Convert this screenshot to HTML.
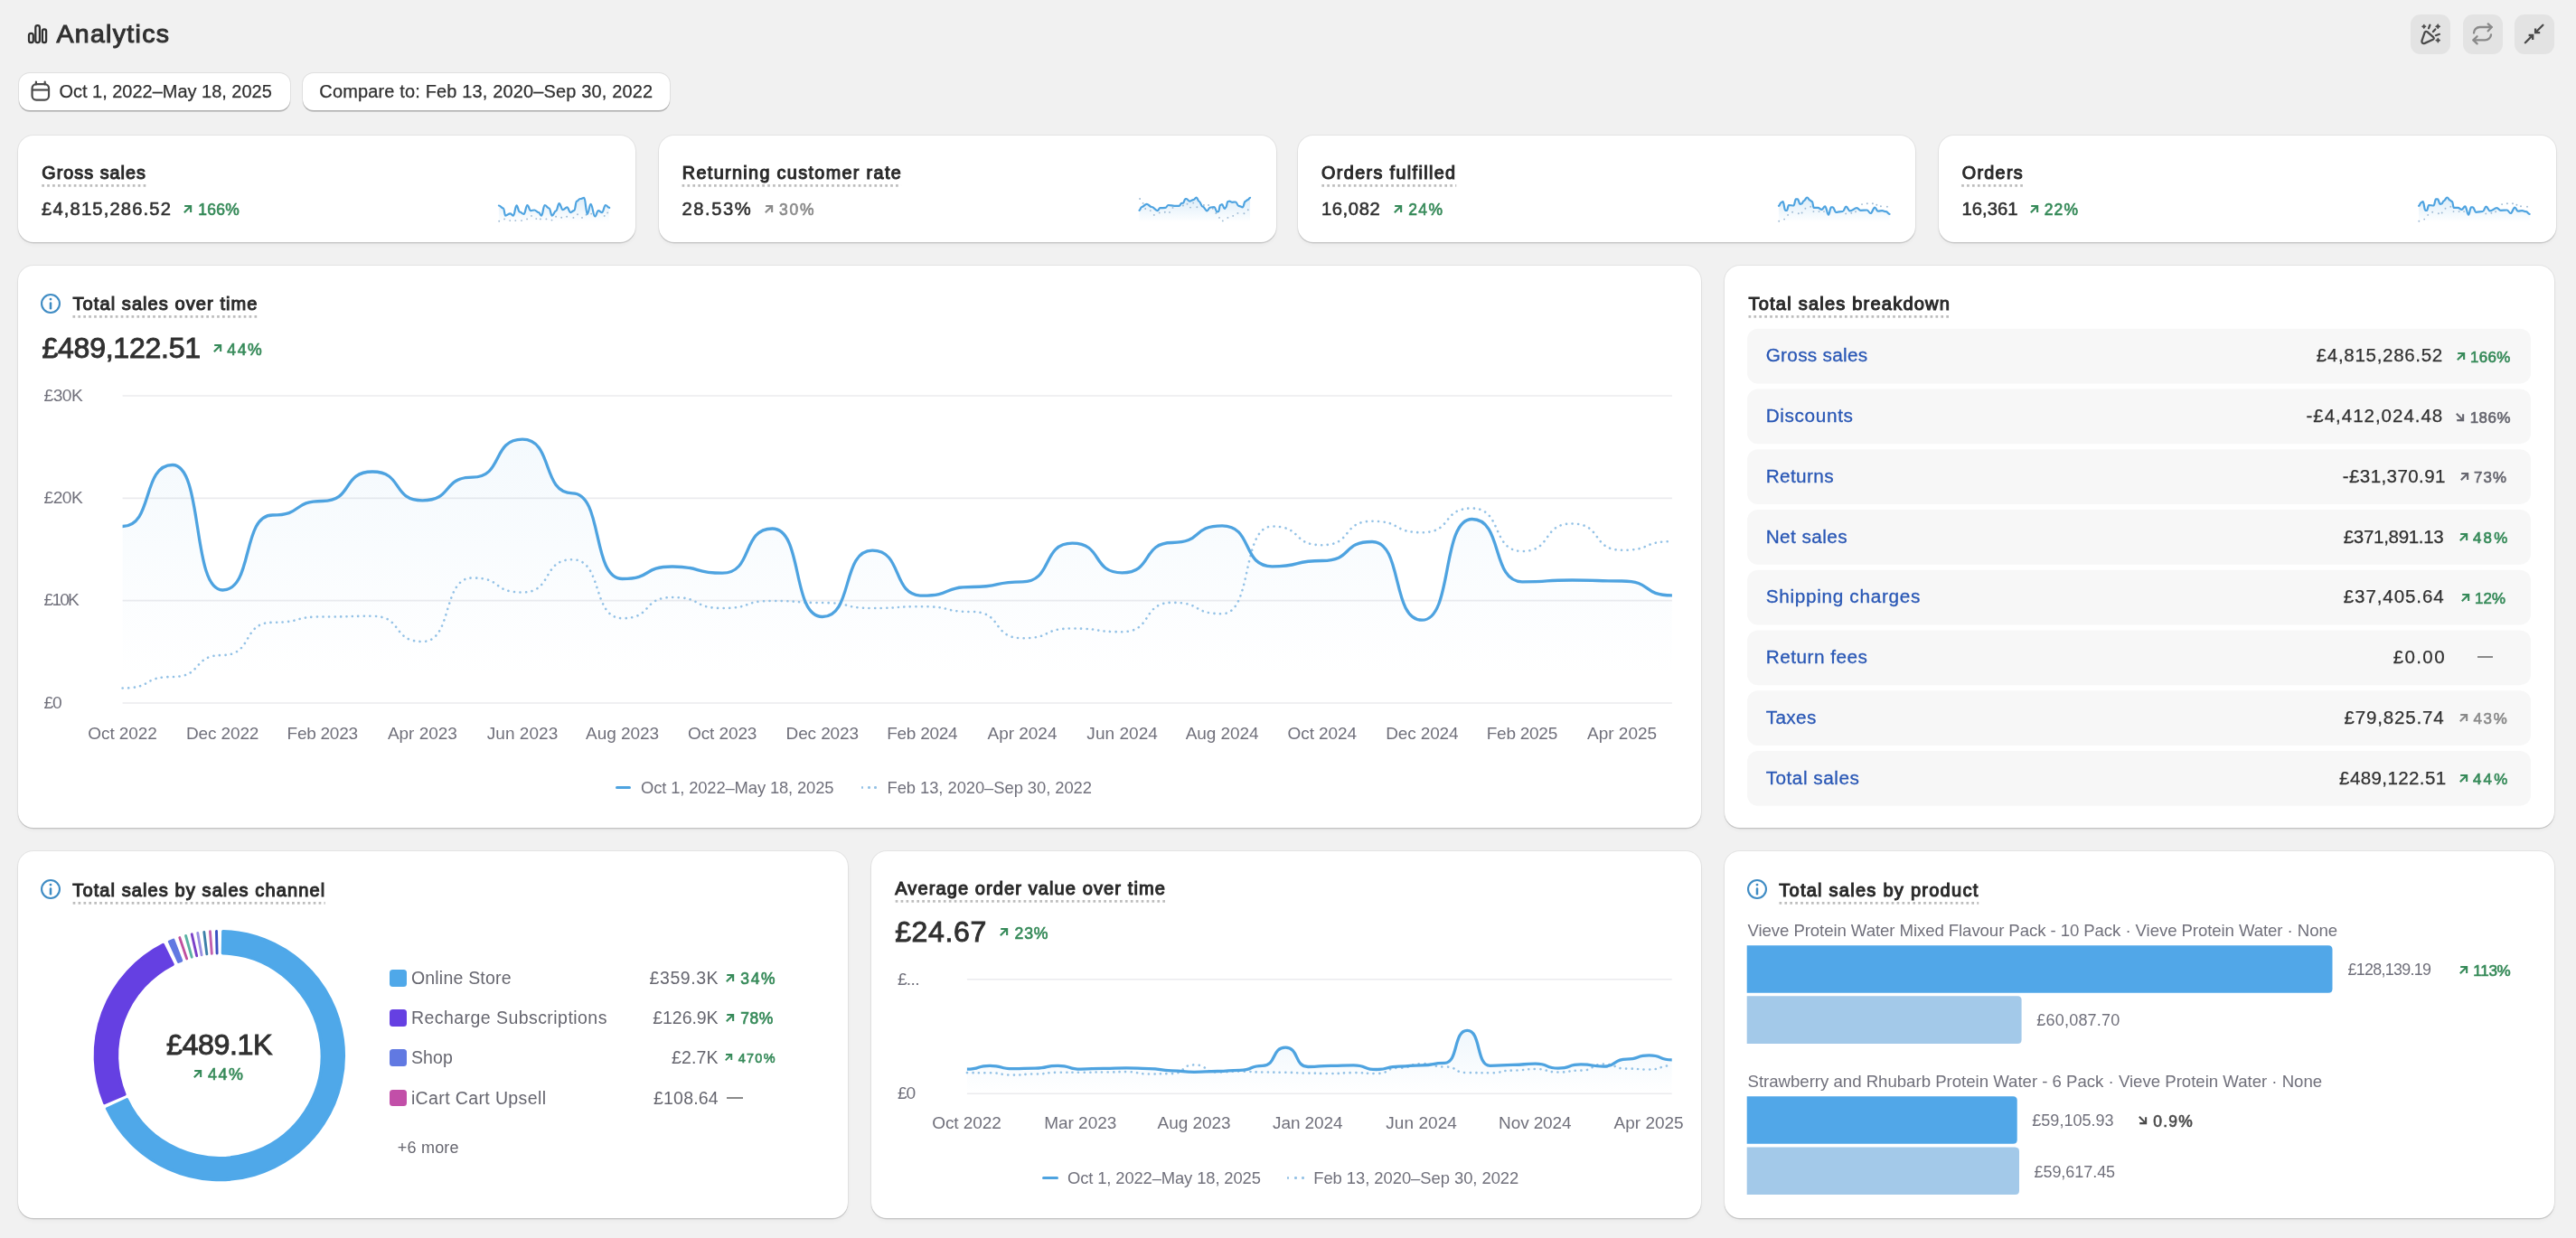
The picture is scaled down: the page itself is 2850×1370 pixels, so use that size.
<!DOCTYPE html>
<html lang="en">
<head>
<meta charset="utf-8">
<title>Analytics</title>
<style>
html,body{margin:0;padding:0;background:#f1f1f1;}
body{width:2850px;height:1370px;overflow:hidden;font-family:"Liberation Sans",sans-serif;}
#app{position:relative;width:2850px;height:1370px;background:#f1f1f1;overflow:hidden;will-change:transform;}
.t{position:absolute;white-space:pre;line-height:1;font-family:"Liberation Sans",sans-serif;}
.card{position:absolute;background:#fff;border-radius:17px;box-shadow:0 0 0 1px rgba(0,0,0,.055),0 1.4px 0 0 rgba(0,0,0,.115),0 3px 4px rgba(0,0,0,.035);}
.btn{position:absolute;background:#fff;border-radius:12px;box-shadow:0 0 0 1px rgba(0,0,0,.075),0 1.7px 0 0 rgba(0,0,0,.21);}
.ibtn{position:absolute;background:#e3e3e3;border-radius:11px;}
.row{position:absolute;background:#f7f7f7;border-radius:12px;}
.sq{position:absolute;width:18.5px;height:18.5px;border-radius:3.5px;}
.bar{position:absolute;border-radius:0 5px 5px 0;}
svg{position:absolute;overflow:visible;}
</style>
</head>
<body>
<div id="app">
<svg style="left:28px;top:24px" width="28" height="28" viewBox="28 24 28 28"><g fill="none" stroke="#303030" stroke-width="2.25"><rect x="32.0" y="36.75" width="4.8" height="10.35" rx="2.4"/><rect x="39.3" y="28.2" width="4.6" height="18.9" rx="2.3"/><rect x="46.9" y="32.45" width="4.2" height="14.65" rx="2.1"/></g></svg>
<div class="btn" style="left:20.6px;top:81.3px;width:300px;height:40.7px"></div>
<div class="btn" style="left:334.6px;top:81.3px;width:406.7px;height:40.7px"></div>
<svg style="left:32px;top:88px" width="26" height="26" viewBox="32 88 26 26"><g fill="none" stroke="#4a4a4a" stroke-width="2.2"><rect x="35.55" y="93.2" width="18.5" height="17.4" rx="4.6"/><path d="M35.6 99.5H54"/><path d="M39.9 93.4V90.6M49.7 93.4V90.6" stroke-linecap="round"/></g></svg>
<div class="ibtn" style="left:2666.6px;top:16px;width:44.1px;height:44px"></div>
<div class="ibtn" style="left:2724.6px;top:16px;width:44.1px;height:44px"></div>
<div class="ibtn" style="left:2782.2px;top:16px;width:44.1px;height:44px"></div>
<svg style="left:2674px;top:22px" width="30" height="30" viewBox="2674 22 30 30"><g fill="none" stroke="#4a4a4a" stroke-width="2.25" stroke-linecap="round" stroke-linejoin="round"><path d="M2682.6 35.9Q2683.9 33.9 2685.6 35.4L2692.2 41.2Q2693.6 42.8 2691.7 43.8L2682.6 47.9Q2679.3 48.7 2679.4 45.3Z"/><path d="M2688.4 27.7L2687.0 31.3M2694.3 32.4L2691.9 35.0M2694.9 39.2L2698.9 37.8"/></g><g fill="#4a4a4a"><path d="M2681.8 26.900000000000002L2682.664 28.436L2684.2000000000003 29.3L2682.664 30.164L2681.8 31.7L2680.936 30.164L2679.4 29.3L2680.936 28.436Z" stroke="#4a4a4a" stroke-width="0.7" stroke-linejoin="round"/><path d="M2697.2 26.6L2698.172 28.328L2699.8999999999996 29.3L2698.172 30.272000000000002L2697.2 32.0L2696.2279999999996 30.272000000000002L2694.5 29.3L2696.2279999999996 28.328Z" stroke="#4a4a4a" stroke-width="0.7" stroke-linejoin="round"/><path d="M2697.3 41.9L2698.2720000000004 43.628L2700.0 44.6L2698.2720000000004 45.572L2697.3 47.300000000000004L2696.328 45.572L2694.6000000000004 44.6L2696.328 43.628Z" stroke="#4a4a4a" stroke-width="0.7" stroke-linejoin="round"/></g></svg>
<svg style="left:2732px;top:22px" width="30" height="30" viewBox="2732 22 30 30"><g fill="none" stroke="#8a8a8a" stroke-width="2.3" stroke-linecap="round" stroke-linejoin="round"><path d="M2737.0 36.5A6.6 6.6 0 0 1 2743.6 30.0H2756.6"/><path d="M2752.7 26.4L2756.7 30.0L2752.7 34.3"/><path d="M2756.0 38.3A6.6 6.6 0 0 1 2749.4 44.4H2736.6"/><path d="M2740.6 40.3L2736.4 44.4L2740.6 48.4"/></g></svg>
<svg style="left:2790px;top:22px" width="30" height="30" viewBox="2790 22 30 30"><g fill="none" stroke="#4a4a4a" stroke-width="2.3" stroke-linecap="round" stroke-linejoin="miter"><path d="M2813.4 27.8L2805.4 35.8"/><path d="M2805.1 31.6V36.1H2810.2" stroke-linecap="butt"/><path d="M2793.9 47.3L2801.9 39.3"/><path d="M2797.6 39H2802.2V43.9" stroke-linecap="butt"/></g></svg>
<div class="card" style="left:20.0px;top:150px;width:683px;height:118px"></div>
<svg style="left:45.75px;top:204.15px" width="116.8" height="2.7" viewBox="0 0 116.8 2.7"><path d="M0 1.35H116.3" stroke="#bdbdbd" stroke-width="2.7" stroke-dasharray="2.7 3.24"/></svg>
<svg style="left:203.00px;top:227.10px" width="9.2" height="9.2" viewBox="0 0 10 10" stroke="#368a59"><path d="M1.3 1.15H8.85V8.7" fill="none" stroke-width="2.3" stroke-linejoin="miter"/><path d="M0.9 9.1L8.3 1.7" fill="none" stroke-width="2.3"/></svg>
<svg style="left:540px;top:206px" width="152" height="50" viewBox="540 206 152 50"><defs><linearGradient id="sg540" x1="0" y1="0" x2="0" y2="1"><stop offset="0" stop-color="#4ea3e0" stop-opacity="0.2"/><stop offset="1" stop-color="#4ea3e0" stop-opacity="0"/></linearGradient></defs><path d="M551.9 246.0L551.9 227.5C554.0 227.5 554.8 230.5 556.9 230.5C557.9 230.5 558.2 238.6 559.2 238.6C561.4 238.6 562.3 236.3 564.5 236.3C565.9 236.3 566.5 238.6 568.0 238.6C569.4 238.6 570.0 227.3 571.5 227.3C572.9 227.3 573.5 234.5 574.9 234.5C576.9 234.5 577.6 236.9 579.6 236.9C581.2 236.9 581.8 227.0 583.4 227.0C585.0 227.0 585.6 233.1 587.2 233.1C588.9 233.1 589.5 232.5 591.3 232.5C593.2 232.5 594.0 235.1 595.9 235.1C597.3 235.1 597.8 238.6 599.1 238.6C600.6 238.6 601.1 227.0 602.6 227.0C604.7 227.0 605.5 230.5 607.6 230.5C608.9 230.5 609.4 238.6 610.8 238.6C612.6 238.6 613.3 233.4 615.1 233.4C616.6 233.4 617.2 225.2 618.6 225.2C620.3 225.2 621.0 232.2 622.7 232.2C624.7 232.2 625.4 229.3 627.4 229.3C629.0 229.3 629.6 235.1 631.1 235.1C633.0 235.1 633.7 232.8 635.5 232.8C636.5 232.8 636.9 222.9 637.8 222.9C639.6 222.9 640.2 220.0 641.9 220.0C643.8 220.0 644.5 218.8 646.3 218.8C647.8 218.8 648.3 236.9 649.8 236.9C651.4 236.9 652.0 225.8 653.6 225.8C655.5 225.8 656.3 239.5 658.2 239.5C659.8 239.5 660.4 233.1 662.0 233.1C663.7 233.1 664.4 235.1 666.1 235.1C667.7 235.1 668.3 227.0 669.9 227.0C671.7 227.0 672.4 229.9 674.2 229.9L674.2 246.0Z" fill="url(#sg540)"/><g fill="#9db9d3"><circle cx="552.2" cy="244.7" r="0.95"/><circle cx="558.1" cy="242.4" r="0.95"/><circle cx="564.2" cy="244.1" r="0.95"/><circle cx="570.3" cy="244.1" r="0.95"/><circle cx="577.0" cy="244.1" r="0.95"/><circle cx="583.1" cy="242.4" r="0.95"/><circle cx="588.0" cy="238.9" r="0.95"/><circle cx="593.3" cy="242.1" r="0.95"/><circle cx="597.9" cy="242.4" r="0.95"/><circle cx="604.4" cy="242.4" r="0.95"/><circle cx="610.5" cy="243.6" r="0.95"/><circle cx="615.1" cy="239.8" r="0.95"/><circle cx="621.2" cy="240.7" r="0.95"/><circle cx="627.1" cy="239.8" r="0.95"/><circle cx="634.4" cy="240.9" r="0.95"/><circle cx="639.0" cy="237.2" r="0.95"/><circle cx="644.0" cy="240.9" r="0.95"/><circle cx="648.6" cy="237.7" r="0.95"/><circle cx="654.2" cy="236.6" r="0.95"/><circle cx="668.7" cy="238.9" r="0.95"/><circle cx="672.2" cy="235.4" r="0.95"/></g><path d="M551.9 227.5C554.0 227.5 554.8 230.5 556.9 230.5C557.9 230.5 558.2 238.6 559.2 238.6C561.4 238.6 562.3 236.3 564.5 236.3C565.9 236.3 566.5 238.6 568.0 238.6C569.4 238.6 570.0 227.3 571.5 227.3C572.9 227.3 573.5 234.5 574.9 234.5C576.9 234.5 577.6 236.9 579.6 236.9C581.2 236.9 581.8 227.0 583.4 227.0C585.0 227.0 585.6 233.1 587.2 233.1C588.9 233.1 589.5 232.5 591.3 232.5C593.2 232.5 594.0 235.1 595.9 235.1C597.3 235.1 597.8 238.6 599.1 238.6C600.6 238.6 601.1 227.0 602.6 227.0C604.7 227.0 605.5 230.5 607.6 230.5C608.9 230.5 609.4 238.6 610.8 238.6C612.6 238.6 613.3 233.4 615.1 233.4C616.6 233.4 617.2 225.2 618.6 225.2C620.3 225.2 621.0 232.2 622.7 232.2C624.7 232.2 625.4 229.3 627.4 229.3C629.0 229.3 629.6 235.1 631.1 235.1C633.0 235.1 633.7 232.8 635.5 232.8C636.5 232.8 636.9 222.9 637.8 222.9C639.6 222.9 640.2 220.0 641.9 220.0C643.8 220.0 644.5 218.8 646.3 218.8C647.8 218.8 648.3 236.9 649.8 236.9C651.4 236.9 652.0 225.8 653.6 225.8C655.5 225.8 656.3 239.5 658.2 239.5C659.8 239.5 660.4 233.1 662.0 233.1C663.7 233.1 664.4 235.1 666.1 235.1C667.7 235.1 668.3 227.0 669.9 227.0C671.7 227.0 672.4 229.9 674.2 229.9" fill="none" stroke="#4ea3e0" stroke-width="2.2" stroke-linejoin="round" stroke-linecap="round"/></svg>
<div class="card" style="left:729.0px;top:150px;width:683px;height:118px"></div>
<svg style="left:754.30px;top:204.15px" width="244.0" height="2.7" viewBox="0 0 244.0 2.7"><path d="M0 1.35H243.6" stroke="#bdbdbd" stroke-width="2.7" stroke-dasharray="2.7 3.24"/></svg>
<svg style="left:845.50px;top:227.10px" width="9.2" height="9.2" viewBox="0 0 10 10" stroke="#8a8a8a"><path d="M1.3 1.15H8.85V8.7" fill="none" stroke-width="2.3" stroke-linejoin="miter"/><path d="M0.9 9.1L8.3 1.7" fill="none" stroke-width="2.3"/></svg>
<svg style="left:1248px;top:206px" width="152" height="50" viewBox="1248 206 152 50"><defs><linearGradient id="sg1248" x1="0" y1="0" x2="0" y2="1"><stop offset="0" stop-color="#4ea3e0" stop-opacity="0.2"/><stop offset="1" stop-color="#4ea3e0" stop-opacity="0"/></linearGradient></defs><path d="M1260.5 246.0L1260.5 232.8C1261.6 232.8 1262.0 229.0 1263.1 229.0C1265.5 229.0 1266.4 225.8 1268.7 225.8C1271.0 225.8 1271.9 229.0 1274.2 229.0C1276.9 229.0 1277.9 233.1 1280.6 233.1C1281.8 233.1 1282.3 230.2 1283.5 230.2C1286.0 230.2 1286.9 229.9 1289.4 229.9C1290.7 229.9 1291.2 227.0 1292.6 227.0C1295.4 227.0 1296.4 227.8 1299.3 227.8C1301.5 227.8 1302.3 227.8 1304.5 227.8C1305.7 227.8 1306.2 224.9 1307.4 224.9C1308.1 224.9 1308.4 224.6 1309.2 224.6C1310.0 224.6 1310.3 220.3 1311.2 220.3C1311.8 220.3 1312.0 220.0 1312.6 220.0C1314.1 220.0 1314.7 222.6 1316.1 222.6C1317.9 222.6 1318.5 221.1 1320.2 221.1C1321.7 221.1 1322.2 218.5 1323.7 218.5C1324.9 218.5 1325.4 222.9 1326.6 222.9C1328.3 222.9 1329.0 228.7 1330.7 228.7C1332.7 228.7 1333.4 233.4 1335.4 233.4C1336.8 233.4 1337.4 229.6 1338.9 229.6C1340.8 229.6 1341.6 229.0 1343.5 229.0C1344.7 229.0 1345.2 234.5 1346.4 234.5C1347.2 234.5 1347.4 234.0 1348.2 234.0C1348.9 234.0 1349.2 227.0 1349.9 227.0C1350.8 227.0 1351.1 226.1 1352.0 226.1C1353.2 226.1 1353.6 231.0 1354.9 231.0C1355.5 231.0 1355.7 229.6 1356.3 229.6C1357.2 229.6 1357.5 223.2 1358.4 223.2C1359.1 223.2 1359.4 222.6 1360.1 222.6C1361.3 222.6 1361.8 223.8 1363.0 223.8C1364.7 223.8 1365.4 223.5 1367.1 223.5C1368.4 223.5 1369.0 227.8 1370.3 227.8C1372.3 227.8 1373.0 229.3 1375.0 229.3C1376.1 229.3 1376.5 222.9 1377.6 222.9C1378.8 222.9 1379.3 221.1 1380.5 221.1C1381.6 221.1 1382.0 218.8 1383.1 218.8L1383.1 246.0Z" fill="url(#sg1248)"/><g fill="#9db9d3"><circle cx="1261.1" cy="220.0" r="0.95"/><circle cx="1264.6" cy="224.9" r="0.95"/><circle cx="1267.2" cy="231.0" r="0.95"/><circle cx="1272.8" cy="233.1" r="0.95"/><circle cx="1276.8" cy="237.9" r="0.95"/><circle cx="1282.7" cy="235.4" r="0.95"/><circle cx="1288.8" cy="234.8" r="0.95"/><circle cx="1294.0" cy="234.9" r="0.95"/><circle cx="1297.5" cy="229.9" r="0.95"/><circle cx="1308.9" cy="227.5" r="0.95"/><circle cx="1313.5" cy="225.8" r="0.95"/><circle cx="1317.0" cy="229.6" r="0.95"/><circle cx="1320.2" cy="224.6" r="0.95"/><circle cx="1324.3" cy="229.2" r="0.95"/><circle cx="1331.9" cy="227.0" r="0.95"/><circle cx="1337.1" cy="227.0" r="0.95"/><circle cx="1341.8" cy="230.8" r="0.95"/><circle cx="1345.3" cy="236.0" r="0.95"/><circle cx="1349.0" cy="240.9" r="0.95"/><circle cx="1352.8" cy="244.4" r="0.95"/><circle cx="1358.4" cy="240.9" r="0.95"/><circle cx="1364.2" cy="238.9" r="0.95"/><circle cx="1369.4" cy="235.9" r="0.95"/><circle cx="1376.4" cy="236.3" r="0.95"/><circle cx="1380.8" cy="232.2" r="0.95"/></g><path d="M1260.5 232.8C1261.6 232.8 1262.0 229.0 1263.1 229.0C1265.5 229.0 1266.4 225.8 1268.7 225.8C1271.0 225.8 1271.9 229.0 1274.2 229.0C1276.9 229.0 1277.9 233.1 1280.6 233.1C1281.8 233.1 1282.3 230.2 1283.5 230.2C1286.0 230.2 1286.9 229.9 1289.4 229.9C1290.7 229.9 1291.2 227.0 1292.6 227.0C1295.4 227.0 1296.4 227.8 1299.3 227.8C1301.5 227.8 1302.3 227.8 1304.5 227.8C1305.7 227.8 1306.2 224.9 1307.4 224.9C1308.1 224.9 1308.4 224.6 1309.2 224.6C1310.0 224.6 1310.3 220.3 1311.2 220.3C1311.8 220.3 1312.0 220.0 1312.6 220.0C1314.1 220.0 1314.7 222.6 1316.1 222.6C1317.9 222.6 1318.5 221.1 1320.2 221.1C1321.7 221.1 1322.2 218.5 1323.7 218.5C1324.9 218.5 1325.4 222.9 1326.6 222.9C1328.3 222.9 1329.0 228.7 1330.7 228.7C1332.7 228.7 1333.4 233.4 1335.4 233.4C1336.8 233.4 1337.4 229.6 1338.9 229.6C1340.8 229.6 1341.6 229.0 1343.5 229.0C1344.7 229.0 1345.2 234.5 1346.4 234.5C1347.2 234.5 1347.4 234.0 1348.2 234.0C1348.9 234.0 1349.2 227.0 1349.9 227.0C1350.8 227.0 1351.1 226.1 1352.0 226.1C1353.2 226.1 1353.6 231.0 1354.9 231.0C1355.5 231.0 1355.7 229.6 1356.3 229.6C1357.2 229.6 1357.5 223.2 1358.4 223.2C1359.1 223.2 1359.4 222.6 1360.1 222.6C1361.3 222.6 1361.8 223.8 1363.0 223.8C1364.7 223.8 1365.4 223.5 1367.1 223.5C1368.4 223.5 1369.0 227.8 1370.3 227.8C1372.3 227.8 1373.0 229.3 1375.0 229.3C1376.1 229.3 1376.5 222.9 1377.6 222.9C1378.8 222.9 1379.3 221.1 1380.5 221.1C1381.6 221.1 1382.0 218.8 1383.1 218.8" fill="none" stroke="#4ea3e0" stroke-width="2.2" stroke-linejoin="round" stroke-linecap="round"/></svg>
<div class="card" style="left:1435.9px;top:150px;width:683px;height:118px"></div>
<svg style="left:1461.60px;top:204.15px" width="150.0" height="2.7" viewBox="0 0 150.0 2.7"><path d="M0 1.35H149.6" stroke="#bdbdbd" stroke-width="2.7" stroke-dasharray="2.7 3.24"/></svg>
<svg style="left:1541.70px;top:227.10px" width="9.2" height="9.2" viewBox="0 0 10 10" stroke="#368a59"><path d="M1.3 1.15H8.85V8.7" fill="none" stroke-width="2.3" stroke-linejoin="miter"/><path d="M0.9 9.1L8.3 1.7" fill="none" stroke-width="2.3"/></svg>
<svg style="left:1956px;top:206px" width="152" height="50" viewBox="1956 206 152 50"><defs><linearGradient id="sg1956" x1="0" y1="0" x2="0" y2="1"><stop offset="0" stop-color="#4ea3e0" stop-opacity="0.2"/><stop offset="1" stop-color="#4ea3e0" stop-opacity="0"/></linearGradient></defs><path d="M1967.9 246.0L1967.9 227.8C1969.0 227.8 1969.5 224.1 1970.6 224.1C1971.4 224.1 1971.7 223.2 1972.6 223.2C1973.7 223.2 1974.1 232.8 1975.2 232.8C1976.0 232.8 1976.2 232.8 1977.0 232.8C1977.8 232.8 1978.1 227.0 1979.0 227.0C1981.3 227.0 1982.2 227.5 1984.5 227.5C1985.5 227.5 1985.9 220.3 1986.9 220.3C1987.7 220.3 1988.1 220.3 1988.9 220.3C1990.0 220.3 1990.4 225.8 1991.5 225.8C1992.3 225.8 1992.5 225.5 1993.3 225.5C1994.3 225.5 1994.6 222.3 1995.6 222.3C1997.2 222.3 1997.8 218.5 1999.4 218.5C2000.7 218.5 2001.2 221.7 2002.6 221.7C2003.6 221.7 2003.9 223.2 2004.9 223.2C2005.7 223.2 2005.9 229.9 2006.7 229.9C2008.6 229.9 2009.4 229.9 2011.3 229.9C2013.0 229.9 2013.7 231.9 2015.4 231.9C2017.0 231.9 2017.6 228.4 2019.2 228.4C2020.8 228.4 2021.4 237.7 2023.0 237.7C2024.2 237.7 2024.7 229.3 2025.9 229.3C2026.7 229.3 2027.1 229.3 2027.9 229.3C2029.3 229.3 2029.8 234.8 2031.1 234.8C2034.3 234.8 2035.5 234.0 2038.7 234.0C2040.3 234.0 2040.9 228.7 2042.5 228.7C2044.2 228.7 2044.9 233.4 2046.6 233.4C2049.9 233.4 2051.1 230.2 2054.4 230.2C2056.1 230.2 2056.8 232.8 2058.5 232.8C2061.4 232.8 2062.6 232.5 2065.5 232.5C2067.2 232.5 2067.9 236.0 2069.6 236.0C2071.5 236.0 2072.3 229.6 2074.2 229.6C2075.7 229.6 2076.3 233.7 2077.7 233.7C2079.7 233.7 2080.4 233.1 2082.4 233.1C2084.2 233.1 2084.9 234.2 2086.8 234.2C2088.3 234.2 2088.9 236.9 2090.5 236.9L2090.5 246.0Z" fill="url(#sg1956)"/><g fill="#9db9d3"><circle cx="1968.2" cy="244.7" r="0.95"/><circle cx="1974.1" cy="242.6" r="0.95"/><circle cx="1978.1" cy="237.9" r="0.95"/><circle cx="1983.1" cy="234.8" r="0.95"/><circle cx="1989.8" cy="236.3" r="0.95"/><circle cx="1993.6" cy="235.5" r="0.95"/><circle cx="1997.4" cy="230.8" r="0.95"/><circle cx="2003.2" cy="228.7" r="0.95"/><circle cx="2006.4" cy="234.1" r="0.95"/><circle cx="2012.5" cy="234.1" r="0.95"/><circle cx="2018.0" cy="234.1" r="0.95"/><circle cx="2042.2" cy="236.4" r="0.95"/><circle cx="2048.3" cy="235.8" r="0.95"/><circle cx="2053.0" cy="234.2" r="0.95"/><circle cx="2060.0" cy="226.1" r="0.95"/><circle cx="2065.8" cy="225.2" r="0.95"/><circle cx="2071.9" cy="225.2" r="0.95"/><circle cx="2076.3" cy="226.8" r="0.95"/><circle cx="2080.9" cy="228.2" r="0.95"/><circle cx="2087.9" cy="228.7" r="0.95"/></g><path d="M1967.9 227.8C1969.0 227.8 1969.5 224.1 1970.6 224.1C1971.4 224.1 1971.7 223.2 1972.6 223.2C1973.7 223.2 1974.1 232.8 1975.2 232.8C1976.0 232.8 1976.2 232.8 1977.0 232.8C1977.8 232.8 1978.1 227.0 1979.0 227.0C1981.3 227.0 1982.2 227.5 1984.5 227.5C1985.5 227.5 1985.9 220.3 1986.9 220.3C1987.7 220.3 1988.1 220.3 1988.9 220.3C1990.0 220.3 1990.4 225.8 1991.5 225.8C1992.3 225.8 1992.5 225.5 1993.3 225.5C1994.3 225.5 1994.6 222.3 1995.6 222.3C1997.2 222.3 1997.8 218.5 1999.4 218.5C2000.7 218.5 2001.2 221.7 2002.6 221.7C2003.6 221.7 2003.9 223.2 2004.9 223.2C2005.7 223.2 2005.9 229.9 2006.7 229.9C2008.6 229.9 2009.4 229.9 2011.3 229.9C2013.0 229.9 2013.7 231.9 2015.4 231.9C2017.0 231.9 2017.6 228.4 2019.2 228.4C2020.8 228.4 2021.4 237.7 2023.0 237.7C2024.2 237.7 2024.7 229.3 2025.9 229.3C2026.7 229.3 2027.1 229.3 2027.9 229.3C2029.3 229.3 2029.8 234.8 2031.1 234.8C2034.3 234.8 2035.5 234.0 2038.7 234.0C2040.3 234.0 2040.9 228.7 2042.5 228.7C2044.2 228.7 2044.9 233.4 2046.6 233.4C2049.9 233.4 2051.1 230.2 2054.4 230.2C2056.1 230.2 2056.8 232.8 2058.5 232.8C2061.4 232.8 2062.6 232.5 2065.5 232.5C2067.2 232.5 2067.9 236.0 2069.6 236.0C2071.5 236.0 2072.3 229.6 2074.2 229.6C2075.7 229.6 2076.3 233.7 2077.7 233.7C2079.7 233.7 2080.4 233.1 2082.4 233.1C2084.2 233.1 2084.9 234.2 2086.8 234.2C2088.3 234.2 2088.9 236.9 2090.5 236.9" fill="none" stroke="#4ea3e0" stroke-width="2.2" stroke-linejoin="round" stroke-linecap="round"/></svg>
<div class="card" style="left:2144.8px;top:150px;width:683px;height:118px"></div>
<svg style="left:2170.20px;top:204.15px" width="69.0" height="2.7" viewBox="0 0 69.0 2.7"><path d="M0 1.35H68.6" stroke="#bdbdbd" stroke-width="2.7" stroke-dasharray="2.7 3.24"/></svg>
<svg style="left:2245.90px;top:227.10px" width="9.2" height="9.2" viewBox="0 0 10 10" stroke="#368a59"><path d="M1.3 1.15H8.85V8.7" fill="none" stroke-width="2.3" stroke-linejoin="miter"/><path d="M0.9 9.1L8.3 1.7" fill="none" stroke-width="2.3"/></svg>
<svg style="left:2664px;top:206px" width="152" height="50" viewBox="2664 206 152 50"><defs><linearGradient id="sg2664" x1="0" y1="0" x2="0" y2="1"><stop offset="0" stop-color="#4ea3e0" stop-opacity="0.2"/><stop offset="1" stop-color="#4ea3e0" stop-opacity="0"/></linearGradient></defs><path d="M2676.0 246.0L2676.0 227.8C2677.1 227.8 2677.6 224.1 2678.7 224.1C2679.5 224.1 2679.8 223.2 2680.7 223.2C2681.8 223.2 2682.2 232.8 2683.3 232.8C2684.1 232.8 2684.3 232.8 2685.1 232.8C2685.9 232.8 2686.2 227.0 2687.1 227.0C2689.4 227.0 2690.3 227.5 2692.6 227.5C2693.6 227.5 2694.0 220.3 2695.0 220.3C2695.8 220.3 2696.2 220.3 2697.0 220.3C2698.1 220.3 2698.5 225.8 2699.6 225.8C2700.4 225.8 2700.6 225.5 2701.4 225.5C2702.4 225.5 2702.7 222.3 2703.7 222.3C2705.3 222.3 2705.9 218.5 2707.5 218.5C2708.8 218.5 2709.3 221.7 2710.7 221.7C2711.7 221.7 2712.0 223.2 2713.0 223.2C2713.8 223.2 2714.0 229.9 2714.8 229.9C2716.7 229.9 2717.5 229.9 2719.4 229.9C2721.1 229.9 2721.8 231.9 2723.5 231.9C2725.1 231.9 2725.7 228.4 2727.3 228.4C2728.9 228.4 2729.5 237.7 2731.1 237.7C2732.3 237.7 2732.8 229.3 2734.0 229.3C2734.8 229.3 2735.2 229.3 2736.0 229.3C2737.4 229.3 2737.9 234.8 2739.2 234.8C2742.4 234.8 2743.6 234.0 2746.8 234.0C2748.4 234.0 2749.0 228.7 2750.6 228.7C2752.3 228.7 2753.0 233.4 2754.7 233.4C2758.0 233.4 2759.2 230.2 2762.5 230.2C2764.2 230.2 2764.9 232.8 2766.6 232.8C2769.5 232.8 2770.7 232.5 2773.6 232.5C2775.3 232.5 2776.0 236.0 2777.7 236.0C2779.6 236.0 2780.4 229.6 2782.3 229.6C2783.8 229.6 2784.4 233.7 2785.8 233.7C2787.8 233.7 2788.5 233.1 2790.5 233.1C2792.3 233.1 2793.0 234.2 2794.9 234.2C2796.4 234.2 2797.0 236.9 2798.6 236.9L2798.6 246.0Z" fill="url(#sg2664)"/><g fill="#9db9d3"><circle cx="2676.3" cy="244.7" r="0.95"/><circle cx="2682.2" cy="242.6" r="0.95"/><circle cx="2686.2" cy="237.9" r="0.95"/><circle cx="2691.2" cy="234.8" r="0.95"/><circle cx="2697.9" cy="236.3" r="0.95"/><circle cx="2701.7" cy="235.5" r="0.95"/><circle cx="2705.5" cy="230.8" r="0.95"/><circle cx="2711.3" cy="228.7" r="0.95"/><circle cx="2714.5" cy="234.1" r="0.95"/><circle cx="2720.6" cy="234.1" r="0.95"/><circle cx="2726.1" cy="234.1" r="0.95"/><circle cx="2750.3" cy="236.4" r="0.95"/><circle cx="2756.4" cy="235.8" r="0.95"/><circle cx="2761.1" cy="234.2" r="0.95"/><circle cx="2768.1" cy="226.1" r="0.95"/><circle cx="2773.9" cy="225.2" r="0.95"/><circle cx="2780.0" cy="225.2" r="0.95"/><circle cx="2784.4" cy="226.8" r="0.95"/><circle cx="2789.0" cy="228.2" r="0.95"/><circle cx="2796.0" cy="228.7" r="0.95"/></g><path d="M2676.0 227.8C2677.1 227.8 2677.6 224.1 2678.7 224.1C2679.5 224.1 2679.8 223.2 2680.7 223.2C2681.8 223.2 2682.2 232.8 2683.3 232.8C2684.1 232.8 2684.3 232.8 2685.1 232.8C2685.9 232.8 2686.2 227.0 2687.1 227.0C2689.4 227.0 2690.3 227.5 2692.6 227.5C2693.6 227.5 2694.0 220.3 2695.0 220.3C2695.8 220.3 2696.2 220.3 2697.0 220.3C2698.1 220.3 2698.5 225.8 2699.6 225.8C2700.4 225.8 2700.6 225.5 2701.4 225.5C2702.4 225.5 2702.7 222.3 2703.7 222.3C2705.3 222.3 2705.9 218.5 2707.5 218.5C2708.8 218.5 2709.3 221.7 2710.7 221.7C2711.7 221.7 2712.0 223.2 2713.0 223.2C2713.8 223.2 2714.0 229.9 2714.8 229.9C2716.7 229.9 2717.5 229.9 2719.4 229.9C2721.1 229.9 2721.8 231.9 2723.5 231.9C2725.1 231.9 2725.7 228.4 2727.3 228.4C2728.9 228.4 2729.5 237.7 2731.1 237.7C2732.3 237.7 2732.8 229.3 2734.0 229.3C2734.8 229.3 2735.2 229.3 2736.0 229.3C2737.4 229.3 2737.9 234.8 2739.2 234.8C2742.4 234.8 2743.6 234.0 2746.8 234.0C2748.4 234.0 2749.0 228.7 2750.6 228.7C2752.3 228.7 2753.0 233.4 2754.7 233.4C2758.0 233.4 2759.2 230.2 2762.5 230.2C2764.2 230.2 2764.9 232.8 2766.6 232.8C2769.5 232.8 2770.7 232.5 2773.6 232.5C2775.3 232.5 2776.0 236.0 2777.7 236.0C2779.6 236.0 2780.4 229.6 2782.3 229.6C2783.8 229.6 2784.4 233.7 2785.8 233.7C2787.8 233.7 2788.5 233.1 2790.5 233.1C2792.3 233.1 2793.0 234.2 2794.9 234.2C2796.4 234.2 2797.0 236.9 2798.6 236.9" fill="none" stroke="#4ea3e0" stroke-width="2.2" stroke-linejoin="round" stroke-linecap="round"/></svg>
<div class="card" style="left:20px;top:294px;width:1862px;height:622px"></div>
<svg style="left:43.80px;top:324.10px" width="24" height="24" viewBox="-12 -12 24 24"><circle r="9.95" fill="none" stroke="#3f8cc4" stroke-width="2.1"/><circle cy="-4.9" r="1.45" fill="#3f8cc4"/><path d="M0 -0.4V5.2" stroke="#3f8cc4" stroke-width="2.5" stroke-linecap="round"/></svg>
<svg style="left:80.00px;top:349.20px" width="206.0" height="2.7" viewBox="0 0 206.0 2.7"><path d="M0 1.35H205.6" stroke="#bdbdbd" stroke-width="2.7" stroke-dasharray="2.7 3.24"/></svg>
<svg style="left:235.50px;top:381.17px" width="9.2" height="9.2" viewBox="0 0 10 10" stroke="#368a59"><path d="M1.3 1.15H8.85V8.7" fill="none" stroke-width="2.3" stroke-linejoin="miter"/><path d="M0.9 9.1L8.3 1.7" fill="none" stroke-width="2.3"/></svg>
<svg style="left:120px;top:420px" width="1750" height="380" viewBox="120 420 1750 380"><defs><linearGradient id="mg" gradientUnits="userSpaceOnUse" x1="0" y1="470" x2="0" y2="750"><stop offset="0" stop-color="#4ea3e0" stop-opacity="0.065"/><stop offset="1" stop-color="#4ea3e0" stop-opacity="0"/></linearGradient></defs><path d="M135.6 438.0H1849.9" stroke="#ebebee" stroke-width="1.6"/><path d="M135.6 551.33H1849.9" stroke="#ebebee" stroke-width="1.6"/><path d="M135.6 664.67H1849.9" stroke="#ebebee" stroke-width="1.6"/><path d="M135.6 778.0H1849.9" stroke="#ebebee" stroke-width="1.6"/><path d="M135.6 582.5C169.9 582.5 156.6 514.5 190.9 514.5C225.2 514.5 211.9 653.0 246.2 653.0C280.5 653.0 267.2 570.0 301.5 570.0C335.8 570.0 322.5 554.5 356.8 554.5C391.1 554.5 377.8 522.0 412.1 522.0C446.4 522.0 433.1 553.8 467.4 553.8C501.7 553.8 488.4 528.2 522.7 528.2C557.0 528.2 543.7 486.2 578.0 486.2C612.3 486.2 599.0 545.8 633.3 545.8C667.6 545.8 654.3 640.5 688.6 640.5C722.9 640.5 709.6 627.0 743.9 627.0C778.2 627.0 764.9 634.2 799.2 634.2C833.5 634.2 820.2 585.0 854.5 585.0C888.8 585.0 875.5 682.5 909.8 682.5C944.1 682.5 930.8 609.2 965.1 609.2C999.4 609.2 986.1 659.2 1020.4 659.2C1054.7 659.2 1041.4 649.5 1075.7 649.5C1110.0 649.5 1096.7 643.8 1131.0 643.8C1165.3 643.8 1152.0 601.2 1186.3 601.2C1220.6 601.2 1207.3 633.8 1241.6 633.8C1275.9 633.8 1262.6 600.5 1296.9 600.5C1331.2 600.5 1317.9 581.8 1352.2 581.8C1386.5 581.8 1373.2 626.8 1407.5 626.8C1441.8 626.8 1428.5 620.5 1462.8 620.5C1497.1 620.5 1483.8 599.5 1518.1 599.5C1552.4 599.5 1539.1 686.2 1573.4 686.2C1607.7 686.2 1594.4 574.5 1628.7 574.5C1663.0 574.5 1649.7 643.8 1684.0 643.8C1718.3 643.8 1705.0 642.0 1739.3 642.0C1773.6 642.0 1760.3 643.0 1794.6 643.0C1828.9 643.0 1815.6 658.8 1849.9 658.8L1849.9 778L135.6 778Z" fill="url(#mg)"/><path d="M135.6 761.5C169.9 761.5 156.6 749.0 190.9 749.0C225.2 749.0 211.9 725.0 246.2 725.0C280.5 725.0 267.2 688.8 301.5 688.8C335.8 688.8 322.5 682.5 356.8 682.5C391.1 682.5 377.8 681.8 412.1 681.8C446.4 681.8 433.1 710.0 467.4 710.0C501.7 710.0 488.4 639.5 522.7 639.5C557.0 639.5 543.7 655.5 578.0 655.5C612.3 655.5 599.0 619.2 633.3 619.2C667.6 619.2 654.3 684.2 688.6 684.2C722.9 684.2 709.6 661.0 743.9 661.0C778.2 661.0 764.9 673.0 799.2 673.0C833.5 673.0 820.2 665.0 854.5 665.0C888.8 665.0 875.5 667.0 909.8 667.0C944.1 667.0 930.8 673.0 965.1 673.0C999.4 673.0 986.1 671.2 1020.4 671.2C1054.7 671.2 1041.4 677.0 1075.7 677.0C1110.0 677.0 1096.7 706.2 1131.0 706.2C1165.3 706.2 1152.0 695.5 1186.3 695.5C1220.6 695.5 1207.3 699.2 1241.6 699.2C1275.9 699.2 1262.6 666.8 1296.9 666.8C1331.2 666.8 1317.9 679.2 1352.2 679.2C1386.5 679.2 1373.2 582.5 1407.5 582.5C1441.8 582.5 1428.5 603.2 1462.8 603.2C1497.1 603.2 1483.8 576.8 1518.1 576.8C1552.4 576.8 1539.1 589.2 1573.4 589.2C1607.7 589.2 1594.4 562.5 1628.7 562.5C1663.0 562.5 1649.7 610.0 1684.0 610.0C1718.3 610.0 1705.0 579.5 1739.3 579.5C1773.6 579.5 1760.3 608.8 1794.6 608.8C1828.9 608.8 1815.6 599.2 1849.9 599.2" fill="none" stroke="#94c2e6" stroke-width="2.6" stroke-linecap="round" stroke-dasharray="0.1 6.4"/><path d="M135.6 582.5C169.9 582.5 156.6 514.5 190.9 514.5C225.2 514.5 211.9 653.0 246.2 653.0C280.5 653.0 267.2 570.0 301.5 570.0C335.8 570.0 322.5 554.5 356.8 554.5C391.1 554.5 377.8 522.0 412.1 522.0C446.4 522.0 433.1 553.8 467.4 553.8C501.7 553.8 488.4 528.2 522.7 528.2C557.0 528.2 543.7 486.2 578.0 486.2C612.3 486.2 599.0 545.8 633.3 545.8C667.6 545.8 654.3 640.5 688.6 640.5C722.9 640.5 709.6 627.0 743.9 627.0C778.2 627.0 764.9 634.2 799.2 634.2C833.5 634.2 820.2 585.0 854.5 585.0C888.8 585.0 875.5 682.5 909.8 682.5C944.1 682.5 930.8 609.2 965.1 609.2C999.4 609.2 986.1 659.2 1020.4 659.2C1054.7 659.2 1041.4 649.5 1075.7 649.5C1110.0 649.5 1096.7 643.8 1131.0 643.8C1165.3 643.8 1152.0 601.2 1186.3 601.2C1220.6 601.2 1207.3 633.8 1241.6 633.8C1275.9 633.8 1262.6 600.5 1296.9 600.5C1331.2 600.5 1317.9 581.8 1352.2 581.8C1386.5 581.8 1373.2 626.8 1407.5 626.8C1441.8 626.8 1428.5 620.5 1462.8 620.5C1497.1 620.5 1483.8 599.5 1518.1 599.5C1552.4 599.5 1539.1 686.2 1573.4 686.2C1607.7 686.2 1594.4 574.5 1628.7 574.5C1663.0 574.5 1649.7 643.8 1684.0 643.8C1718.3 643.8 1705.0 642.0 1739.3 642.0C1773.6 642.0 1760.3 643.0 1794.6 643.0C1828.9 643.0 1815.6 658.8 1849.9 658.8" fill="none" stroke="#4ea3e0" stroke-width="3.3" stroke-linecap="butt" stroke-linejoin="round"/></svg>
<div style="position:absolute;left:681px;top:870.10px;width:17.0px;height:3.2px;border-radius:1.6px;background:#4ea3e0"></div>
<div style="position:absolute;left:952.50px;top:870.40px;width:2.6px;height:2.6px;border-radius:50%;background:#94c2e6"></div>
<div style="position:absolute;left:959.95px;top:870.40px;width:2.6px;height:2.6px;border-radius:50%;background:#94c2e6"></div>
<div style="position:absolute;left:967.40px;top:870.40px;width:2.6px;height:2.6px;border-radius:50%;background:#94c2e6"></div>
<div class="card" style="left:1908px;top:294px;width:918.2px;height:622px"></div>
<svg style="left:1934.00px;top:349.40px" width="224.5" height="2.7" viewBox="0 0 224.5 2.7"><path d="M0 1.35H224.1" stroke="#bdbdbd" stroke-width="2.7" stroke-dasharray="2.7 3.24"/></svg>
<svg style="left:1930px;top:361px" width="875" height="66" viewBox="1930 361 875 66"><rect x="1933" y="363.80" width="867.1" height="60.7" rx="12" fill="#f7f7f7"/></svg>
<svg style="left:2717.50px;top:389.88px" width="9.2" height="9.2" viewBox="0 0 10 10" stroke="#368a59"><path d="M1.3 1.15H8.85V8.7" fill="none" stroke-width="2.3" stroke-linejoin="miter"/><path d="M0.9 9.1L8.3 1.7" fill="none" stroke-width="2.3"/></svg>
<svg style="left:1930px;top:428px" width="875" height="66" viewBox="1930 428 875 66"><rect x="1933" y="430.54" width="867.1" height="60.7" rx="12" fill="#f7f7f7"/></svg>
<svg style="left:2717.25px;top:456.62px" width="9.2" height="9.2" viewBox="0 0 10 10" stroke="#66666f"><path d="M1.3 8.85H8.85V1.3" fill="none" stroke-width="2.3" stroke-linejoin="miter"/><path d="M0.9 0.9L8.3 8.3" fill="none" stroke-width="2.3"/></svg>
<svg style="left:1930px;top:495px" width="875" height="66" viewBox="1930 495 875 66"><rect x="1933" y="497.28" width="867.1" height="60.7" rx="12" fill="#f7f7f7"/></svg>
<svg style="left:2721.70px;top:523.36px" width="9.2" height="9.2" viewBox="0 0 10 10" stroke="#66666f"><path d="M1.3 1.15H8.85V8.7" fill="none" stroke-width="2.3" stroke-linejoin="miter"/><path d="M0.9 9.1L8.3 1.7" fill="none" stroke-width="2.3"/></svg>
<svg style="left:1930px;top:562px" width="875" height="66" viewBox="1930 562 875 66"><rect x="1933" y="564.02" width="867.1" height="60.7" rx="12" fill="#f7f7f7"/></svg>
<svg style="left:2720.60px;top:590.10px" width="9.2" height="9.2" viewBox="0 0 10 10" stroke="#368a59"><path d="M1.3 1.15H8.85V8.7" fill="none" stroke-width="2.3" stroke-linejoin="miter"/><path d="M0.9 9.1L8.3 1.7" fill="none" stroke-width="2.3"/></svg>
<svg style="left:1930px;top:628px" width="875" height="66" viewBox="1930 628 875 66"><rect x="1933" y="630.76" width="867.1" height="60.7" rx="12" fill="#f7f7f7"/></svg>
<svg style="left:2722.65px;top:656.84px" width="9.2" height="9.2" viewBox="0 0 10 10" stroke="#368a59"><path d="M1.3 1.15H8.85V8.7" fill="none" stroke-width="2.3" stroke-linejoin="miter"/><path d="M0.9 9.1L8.3 1.7" fill="none" stroke-width="2.3"/></svg>
<svg style="left:1930px;top:695px" width="875" height="66" viewBox="1930 695 875 66"><rect x="1933" y="697.50" width="867.1" height="60.7" rx="12" fill="#f7f7f7"/></svg>
<div style="position:absolute;left:2741.2px;top:726.05px;width:17.0px;height:2.1px;background:#8a8a8a"></div>
<svg style="left:1930px;top:762px" width="875" height="66" viewBox="1930 762 875 66"><rect x="1933" y="764.24" width="867.1" height="60.7" rx="12" fill="#f7f7f7"/></svg>
<svg style="left:2721.00px;top:790.32px" width="9.2" height="9.2" viewBox="0 0 10 10" stroke="#8a8a8a"><path d="M1.3 1.15H8.85V8.7" fill="none" stroke-width="2.3" stroke-linejoin="miter"/><path d="M0.9 9.1L8.3 1.7" fill="none" stroke-width="2.3"/></svg>
<svg style="left:1930px;top:828px" width="875" height="66" viewBox="1930 828 875 66"><rect x="1933" y="830.98" width="867.1" height="60.7" rx="12" fill="#f7f7f7"/></svg>
<svg style="left:2720.50px;top:857.06px" width="9.2" height="9.2" viewBox="0 0 10 10" stroke="#368a59"><path d="M1.3 1.15H8.85V8.7" fill="none" stroke-width="2.3" stroke-linejoin="miter"/><path d="M0.9 9.1L8.3 1.7" fill="none" stroke-width="2.3"/></svg>
<div class="card" style="left:20px;top:942px;width:918px;height:406px"></div>
<svg style="left:43.80px;top:972.30px" width="24" height="24" viewBox="-12 -12 24 24"><circle r="9.95" fill="none" stroke="#3f8cc4" stroke-width="2.1"/><circle cy="-4.9" r="1.45" fill="#3f8cc4"/><path d="M0 -0.4V5.2" stroke="#3f8cc4" stroke-width="2.5" stroke-linecap="round"/></svg>
<svg style="left:79.80px;top:997.70px" width="280.8" height="2.7" viewBox="0 0 280.8 2.7"><path d="M0 1.35H280.4" stroke="#bdbdbd" stroke-width="2.7" stroke-dasharray="2.7 3.24"/></svg>
<svg style="left:100px;top:1025px" width="290" height="290" viewBox="100 1025 290 290"><path d="M246.73 1030.55A137.60 137.60 0 1 1 118.41 1226.83L140.51 1216.71A113.30 113.30 0 1 0 246.33 1054.85Z" fill="#4fa8e9" stroke="#4fa8e9" stroke-width="3.2" stroke-linejoin="round"/><path d="M115.66 1220.61A137.60 137.60 0 0 1 180.45 1045.46L191.22 1067.25A113.30 113.30 0 0 0 138.02 1211.08Z" fill="#6540e2" stroke="#6540e2" stroke-width="3.2" stroke-linejoin="round"/><path d="M187.20 1042.04A137.80 137.80 0 0 1 191.94 1040.05L200.83 1063.10A113.10 113.10 0 0 0 197.41 1064.53Z" fill="#6179e2" stroke="#6179e2" stroke-width="2.8" stroke-linejoin="round"/><path d="M198.78 1037.59L206.65 1060.90" stroke="#c0509f" stroke-width="2.9" stroke-linecap="round"/><path d="M205.53 1035.50L212.19 1059.18" stroke="#5bb2a4" stroke-width="2.9" stroke-linecap="round"/><path d="M212.21 1033.80L217.69 1057.78" stroke="#7a40c8" stroke-width="2.9" stroke-linecap="round"/><path d="M218.74 1032.48L223.05 1056.70" stroke="#9a8fe2" stroke-width="2.9" stroke-linecap="round"/><path d="M225.80 1031.41L228.84 1055.82" stroke="#3d7fa9" stroke-width="2.9" stroke-linecap="round"/><path d="M232.45 1030.74L234.31 1055.27" stroke="#c260ae" stroke-width="2.9" stroke-linecap="round"/><path d="M239.48 1030.39L240.09 1054.98" stroke="#3b4fc1" stroke-width="2.9" stroke-linecap="round"/></svg>
<svg style="left:214.30px;top:1183.65px" width="9.2" height="9.2" viewBox="0 0 10 10" stroke="#368a59"><path d="M1.3 1.15H8.85V8.7" fill="none" stroke-width="2.3" stroke-linejoin="miter"/><path d="M0.9 9.1L8.3 1.7" fill="none" stroke-width="2.3"/></svg>
<div class="sq" style="left:431.1px;top:1073.35px;background:#4fa8e9"></div>
<svg style="left:802.50px;top:1077.90px" width="9.2" height="9.2" viewBox="0 0 10 10" stroke="#368a59"><path d="M1.3 1.15H8.85V8.7" fill="none" stroke-width="2.3" stroke-linejoin="miter"/><path d="M0.9 9.1L8.3 1.7" fill="none" stroke-width="2.3"/></svg>
<div class="sq" style="left:431.1px;top:1117.42px;background:#6540e2"></div>
<svg style="left:802.50px;top:1121.97px" width="9.2" height="9.2" viewBox="0 0 10 10" stroke="#368a59"><path d="M1.3 1.15H8.85V8.7" fill="none" stroke-width="2.3" stroke-linejoin="miter"/><path d="M0.9 9.1L8.3 1.7" fill="none" stroke-width="2.3"/></svg>
<div class="sq" style="left:431.1px;top:1161.49px;background:#6179e2"></div>
<svg style="left:802.30px;top:1166.14px" width="8.2" height="8.2" viewBox="0 0 10 10" stroke="#368a59"><path d="M1.3 1.15H8.85V8.7" fill="none" stroke-width="2.3" stroke-linejoin="miter"/><path d="M0.9 9.1L8.3 1.7" fill="none" stroke-width="2.3"/></svg>
<div class="sq" style="left:431.1px;top:1205.56px;background:#c24fa8"></div>
<div style="position:absolute;left:804px;top:1213.96px;width:18px;height:2.1px;background:#8a8a8a"></div>
<div class="card" style="left:964px;top:942px;width:918px;height:406px"></div>
<svg style="left:989.70px;top:996.10px" width="300.7" height="2.7" viewBox="0 0 300.7 2.7"><path d="M0 1.35H300.3" stroke="#bdbdbd" stroke-width="2.7" stroke-dasharray="2.7 3.24"/></svg>
<svg style="left:1106.10px;top:1027.47px" width="9.2" height="9.2" viewBox="0 0 10 10" stroke="#368a59"><path d="M1.3 1.15H8.85V8.7" fill="none" stroke-width="2.3" stroke-linejoin="miter"/><path d="M0.9 9.1L8.3 1.7" fill="none" stroke-width="2.3"/></svg>
<svg style="left:1060px;top:1070px" width="800" height="150" viewBox="1060 1070 800 150"><defs><linearGradient id="ag" gradientUnits="userSpaceOnUse" x1="0" y1="1140" x2="0" y2="1210"><stop offset="0" stop-color="#4ea3e0" stop-opacity="0.09"/><stop offset="1" stop-color="#4ea3e0" stop-opacity="0"/></linearGradient></defs><path d="M1069.9 1083.8H1849.7M1069.9 1210.3H1849.7" stroke="#ebebee" stroke-width="1.6"/><path d="M1069.9 1183.1C1085.5 1183.1 1079.5 1179.3 1095.1 1179.3C1110.7 1179.3 1104.6 1182.6 1120.2 1182.6C1135.8 1182.6 1129.8 1182.1 1145.4 1182.1C1161.0 1182.1 1154.9 1179.3 1170.5 1179.3C1186.1 1179.3 1180.1 1183.1 1195.7 1183.1C1211.3 1183.1 1205.2 1182.3 1220.8 1182.3C1236.4 1182.3 1230.4 1181.8 1246.0 1181.8C1261.6 1181.8 1255.5 1182.6 1271.1 1182.6C1286.7 1182.6 1280.7 1184.8 1296.3 1184.8C1311.9 1184.8 1305.9 1186.3 1321.4 1186.3C1337.0 1186.3 1331.0 1185.5 1346.6 1185.5C1362.2 1185.5 1356.2 1184.3 1371.8 1184.3C1387.4 1184.3 1381.3 1179.3 1396.9 1179.3C1412.5 1179.3 1406.5 1159.2 1422.1 1159.2C1437.7 1159.2 1431.6 1180.5 1447.2 1180.5C1462.8 1180.5 1456.8 1179.3 1472.4 1179.3C1488.0 1179.3 1481.9 1178.8 1497.5 1178.8C1513.1 1178.8 1507.1 1183.5 1522.7 1183.5C1538.3 1183.5 1532.2 1180.1 1547.8 1180.1C1563.4 1180.1 1557.4 1178.8 1573.0 1178.8C1588.6 1178.8 1582.6 1176.4 1598.2 1176.4C1613.7 1176.4 1607.7 1140.4 1623.3 1140.4C1638.9 1140.4 1632.9 1179.3 1648.5 1179.3C1664.1 1179.3 1658.0 1178.4 1673.6 1178.4C1689.2 1178.4 1683.2 1177.1 1698.8 1177.1C1714.4 1177.1 1708.3 1182.1 1723.9 1182.1C1739.5 1182.1 1733.5 1177.9 1749.1 1177.9C1764.7 1177.9 1758.6 1180.1 1774.2 1180.1C1789.8 1180.1 1783.8 1172.1 1799.4 1172.1C1815.0 1172.1 1808.9 1167.9 1824.5 1167.9C1840.1 1167.9 1834.1 1172.9 1849.7 1172.9L1849.7 1210.3L1069.9 1210.3Z" fill="url(#ag)"/><path d="M1069.9 1187.1C1085.5 1187.1 1079.5 1187.3 1095.1 1187.3C1110.7 1187.3 1104.6 1189.6 1120.2 1189.6C1135.8 1189.6 1129.8 1188.5 1145.4 1188.5C1161.0 1188.5 1154.9 1186.8 1170.5 1186.8C1186.1 1186.8 1180.1 1186.8 1195.7 1186.8C1211.3 1186.8 1205.2 1186.5 1220.8 1186.5C1236.4 1186.5 1230.4 1186.1 1246.0 1186.1C1261.6 1186.1 1255.5 1188.5 1271.1 1188.5C1286.7 1188.5 1280.7 1188.1 1296.3 1188.1C1311.9 1188.1 1305.9 1178.4 1321.4 1178.4C1337.0 1178.4 1331.0 1186.5 1346.6 1186.5C1362.2 1186.5 1356.2 1185.6 1371.8 1185.6C1387.4 1185.6 1381.3 1186.5 1396.9 1186.5C1412.5 1186.5 1406.5 1186.8 1422.1 1186.8C1437.7 1186.8 1431.6 1187.6 1447.2 1187.6C1462.8 1187.6 1456.8 1188.0 1472.4 1188.0C1488.0 1188.0 1481.9 1187.1 1497.5 1187.1C1513.1 1187.1 1507.1 1188.0 1522.7 1188.0C1538.3 1188.0 1532.2 1181.8 1547.8 1181.8C1563.4 1181.8 1557.4 1177.1 1573.0 1177.1C1588.6 1177.1 1582.6 1180.5 1598.2 1180.5C1613.7 1180.5 1607.7 1187.1 1623.3 1187.1C1638.9 1187.1 1632.9 1187.3 1648.5 1187.3C1664.1 1187.3 1658.0 1184.6 1673.6 1184.6C1689.2 1184.6 1683.2 1183.0 1698.8 1183.0C1714.4 1183.0 1708.3 1186.5 1723.9 1186.5C1739.5 1186.5 1733.5 1184.6 1749.1 1184.6C1764.7 1184.6 1758.6 1177.6 1774.2 1177.6C1789.8 1177.6 1783.8 1182.6 1799.4 1182.6C1815.0 1182.6 1808.9 1183.5 1824.5 1183.5C1840.1 1183.5 1834.1 1179.3 1849.7 1179.3" fill="none" stroke="#94c2e6" stroke-width="2.6" stroke-linecap="round" stroke-dasharray="0.1 6.4"/><path d="M1069.9 1183.1C1085.5 1183.1 1079.5 1179.3 1095.1 1179.3C1110.7 1179.3 1104.6 1182.6 1120.2 1182.6C1135.8 1182.6 1129.8 1182.1 1145.4 1182.1C1161.0 1182.1 1154.9 1179.3 1170.5 1179.3C1186.1 1179.3 1180.1 1183.1 1195.7 1183.1C1211.3 1183.1 1205.2 1182.3 1220.8 1182.3C1236.4 1182.3 1230.4 1181.8 1246.0 1181.8C1261.6 1181.8 1255.5 1182.6 1271.1 1182.6C1286.7 1182.6 1280.7 1184.8 1296.3 1184.8C1311.9 1184.8 1305.9 1186.3 1321.4 1186.3C1337.0 1186.3 1331.0 1185.5 1346.6 1185.5C1362.2 1185.5 1356.2 1184.3 1371.8 1184.3C1387.4 1184.3 1381.3 1179.3 1396.9 1179.3C1412.5 1179.3 1406.5 1159.2 1422.1 1159.2C1437.7 1159.2 1431.6 1180.5 1447.2 1180.5C1462.8 1180.5 1456.8 1179.3 1472.4 1179.3C1488.0 1179.3 1481.9 1178.8 1497.5 1178.8C1513.1 1178.8 1507.1 1183.5 1522.7 1183.5C1538.3 1183.5 1532.2 1180.1 1547.8 1180.1C1563.4 1180.1 1557.4 1178.8 1573.0 1178.8C1588.6 1178.8 1582.6 1176.4 1598.2 1176.4C1613.7 1176.4 1607.7 1140.4 1623.3 1140.4C1638.9 1140.4 1632.9 1179.3 1648.5 1179.3C1664.1 1179.3 1658.0 1178.4 1673.6 1178.4C1689.2 1178.4 1683.2 1177.1 1698.8 1177.1C1714.4 1177.1 1708.3 1182.1 1723.9 1182.1C1739.5 1182.1 1733.5 1177.9 1749.1 1177.9C1764.7 1177.9 1758.6 1180.1 1774.2 1180.1C1789.8 1180.1 1783.8 1172.1 1799.4 1172.1C1815.0 1172.1 1808.9 1167.9 1824.5 1167.9C1840.1 1167.9 1834.1 1172.9 1849.7 1172.9" fill="none" stroke="#4ea3e0" stroke-width="3.3" stroke-linecap="butt" stroke-linejoin="round"/></svg>
<div style="position:absolute;left:1152.8px;top:1302.00px;width:18.0px;height:3.2px;border-radius:1.6px;background:#4ea3e0"></div>
<div style="position:absolute;left:1423.90px;top:1302.30px;width:2.6px;height:2.6px;border-radius:50%;background:#94c2e6"></div>
<div style="position:absolute;left:1432.00px;top:1302.30px;width:2.6px;height:2.6px;border-radius:50%;background:#94c2e6"></div>
<div style="position:absolute;left:1440.10px;top:1302.30px;width:2.6px;height:2.6px;border-radius:50%;background:#94c2e6"></div>
<div class="card" style="left:1908px;top:942px;width:918.2px;height:406px"></div>
<svg style="left:1931.70px;top:972.30px" width="24" height="24" viewBox="-12 -12 24 24"><circle r="9.95" fill="none" stroke="#3f8cc4" stroke-width="2.1"/><circle cy="-4.9" r="1.45" fill="#3f8cc4"/><path d="M0 -0.4V5.2" stroke="#3f8cc4" stroke-width="2.5" stroke-linecap="round"/></svg>
<svg style="left:1967.70px;top:997.70px" width="222.1" height="2.7" viewBox="0 0 222.1 2.7"><path d="M0 1.35H221.7" stroke="#bdbdbd" stroke-width="2.7" stroke-dasharray="2.7 3.24"/></svg>
<svg style="left:1930px;top:1040px" width="660" height="290" viewBox="1930 1040 660 290"><path d="M1932.7 1046.2H2576.0Q2580.5 1046.2 2580.5 1050.7V1094.3Q2580.5 1098.8 2576.0 1098.8H1932.7Z" fill="#51a7e8"/><path d="M1932.7 1102.3H2232.1Q2236.6 1102.3 2236.6 1106.8V1150.4Q2236.6 1154.9 2232.1 1154.9H1932.7Z" fill="#a3c9e9"/><path d="M1932.7 1213.2H2227.2Q2231.7 1213.2 2231.7 1217.7V1261.3Q2231.7 1265.8 2227.2 1265.8H1932.7Z" fill="#51a7e8"/><path d="M1932.7 1269.5H2229.5Q2234.0 1269.5 2234.0 1274.0V1317.6Q2234.0 1322.1 2229.5 1322.1H1932.7Z" fill="#a3c9e9"/></svg>
<svg style="left:2720.70px;top:1068.55px" width="9.2" height="9.2" viewBox="0 0 10 10" stroke="#368a59"><path d="M1.3 1.15H8.85V8.7" fill="none" stroke-width="2.3" stroke-linejoin="miter"/><path d="M0.9 9.1L8.3 1.7" fill="none" stroke-width="2.3"/></svg>
<svg style="left:2366.10px;top:1235.40px" width="9.2" height="9.2" viewBox="0 0 10 10" stroke="#4a4a4a"><path d="M1.3 8.85H8.85V1.3" fill="none" stroke-width="2.3" stroke-linejoin="miter"/><path d="M0.9 0.9L8.3 8.3" fill="none" stroke-width="2.3"/></svg>
<span class="t" style="left:62.52px;top:23.48px;font-size:28.47px;color:#303030;letter-spacing:1.316px;-webkit-text-stroke:1.05px #303030;">Analytics</span>
<span class="t" style="left:65.42px;top:91.88px;font-size:19.94px;color:#303030;letter-spacing:0.016px;-webkit-text-stroke:0.25px #303030;">Oct 1, 2022–May 18, 2025</span>
<span class="t" style="left:353.32px;top:91.88px;font-size:19.94px;color:#303030;letter-spacing:0.174px;-webkit-text-stroke:0.25px #303030;">Compare to: Feb 13, 2020–Sep 30, 2022</span>
<span class="t" style="left:46.27px;top:182.22px;font-size:19.77px;color:#2a2a2a;letter-spacing:1.034px;-webkit-text-stroke:1.05px #2a2a2a;">Gross sales</span>
<span class="t" style="left:46.02px;top:221.47px;font-size:20.2px;color:#303030;letter-spacing:1.153px;-webkit-text-stroke:0.55px #303030;">£4,815,286.52</span>
<span class="t" style="left:219.32px;top:224.48px;font-size:17.46px;color:#368a59;letter-spacing:0.247px;-webkit-text-stroke:0.65px #368a59;">166%</span>
<span class="t" style="left:754.82px;top:182.22px;font-size:19.77px;color:#2a2a2a;letter-spacing:1.360px;-webkit-text-stroke:1.05px #2a2a2a;">Returning customer rate</span>
<span class="t" style="left:754.57px;top:221.47px;font-size:20.2px;color:#303030;letter-spacing:1.546px;-webkit-text-stroke:0.55px #303030;">28.53%</span>
<span class="t" style="left:862.08px;top:224.48px;font-size:17.46px;color:#8a8a8a;letter-spacing:1.722px;-webkit-text-stroke:0.65px #8a8a8a;">30%</span>
<span class="t" style="left:1462.12px;top:182.22px;font-size:19.77px;color:#2a2a2a;letter-spacing:1.367px;-webkit-text-stroke:1.05px #2a2a2a;">Orders fulfilled</span>
<span class="t" style="left:1461.88px;top:221.47px;font-size:20.2px;color:#303030;letter-spacing:0.640px;-webkit-text-stroke:0.55px #303030;">16,082</span>
<span class="t" style="left:1558.33px;top:224.48px;font-size:17.46px;color:#368a59;letter-spacing:1.347px;-webkit-text-stroke:0.65px #368a59;">24%</span>
<span class="t" style="left:2170.72px;top:182.22px;font-size:19.77px;color:#2a2a2a;letter-spacing:1.306px;-webkit-text-stroke:1.05px #2a2a2a;">Orders</span>
<span class="t" style="left:2170.47px;top:221.47px;font-size:20.2px;color:#303030;letter-spacing:0.060px;-webkit-text-stroke:0.55px #303030;">16,361</span>
<span class="t" style="left:2261.82px;top:224.48px;font-size:17.46px;color:#368a59;letter-spacing:1.097px;-webkit-text-stroke:0.65px #368a59;">22%</span>
<span class="t" style="left:80.53px;top:326.28px;font-size:20.07px;color:#2a2a2a;letter-spacing:1.054px;-webkit-text-stroke:1.05px #2a2a2a;">Total sales over time</span>
<span class="t" style="left:46.48px;top:368.52px;font-size:32.02px;color:#303030;letter-spacing:-0.250px;-webkit-text-stroke:0.95px #303030;">£489,122.51</span>
<span class="t" style="left:251.32px;top:378.68px;font-size:17.66px;color:#368a59;letter-spacing:1.503px;-webkit-text-stroke:0.65px #368a59;">44%</span>
<span class="t" style="left:48.60px;top:427.75px;font-size:19.2px;color:#70707b;letter-spacing:-0.537px;">£30K</span>
<span class="t" style="left:48.60px;top:541.08px;font-size:19.2px;color:#70707b;letter-spacing:-0.537px;">£20K</span>
<span class="t" style="left:48.60px;top:654.42px;font-size:19.2px;color:#70707b;letter-spacing:-1.871px;">£10K</span>
<span class="t" style="left:48.60px;top:767.75px;font-size:19.2px;color:#70707b;letter-spacing:-1.144px;">£0</span>
<span class="t" style="left:97.35px;top:802.00px;font-size:19.0px;color:#70707b;letter-spacing:-0.087px;">Oct 2022</span>
<span class="t" style="left:205.95px;top:802.00px;font-size:19.0px;color:#70707b;letter-spacing:-0.121px;">Dec 2022</span>
<span class="t" style="left:317.55px;top:802.00px;font-size:19.0px;color:#70707b;letter-spacing:-0.257px;">Feb 2023</span>
<span class="t" style="left:428.90px;top:802.00px;font-size:19.0px;color:#70707b;letter-spacing:-0.018px;">Apr 2023</span>
<span class="t" style="left:538.75px;top:802.00px;font-size:19.0px;color:#70707b;letter-spacing:0.045px;">Jun 2023</span>
<span class="t" style="left:648.10px;top:802.00px;font-size:19.0px;color:#70707b;letter-spacing:-0.051px;">Aug 2023</span>
<span class="t" style="left:760.95px;top:802.00px;font-size:19.0px;color:#70707b;letter-spacing:-0.087px;">Oct 2023</span>
<span class="t" style="left:869.55px;top:802.00px;font-size:19.0px;color:#70707b;letter-spacing:-0.121px;">Dec 2023</span>
<span class="t" style="left:981.15px;top:802.00px;font-size:19.0px;color:#70707b;letter-spacing:-0.257px;">Feb 2024</span>
<span class="t" style="left:1092.50px;top:802.00px;font-size:19.0px;color:#70707b;letter-spacing:-0.018px;">Apr 2024</span>
<span class="t" style="left:1202.35px;top:802.00px;font-size:19.0px;color:#70707b;letter-spacing:0.045px;">Jun 2024</span>
<span class="t" style="left:1311.70px;top:802.00px;font-size:19.0px;color:#70707b;letter-spacing:-0.051px;">Aug 2024</span>
<span class="t" style="left:1424.55px;top:802.00px;font-size:19.0px;color:#70707b;letter-spacing:-0.087px;">Oct 2024</span>
<span class="t" style="left:1533.15px;top:802.00px;font-size:19.0px;color:#70707b;letter-spacing:-0.121px;">Dec 2024</span>
<span class="t" style="left:1644.75px;top:802.00px;font-size:19.0px;color:#70707b;letter-spacing:-0.257px;">Feb 2025</span>
<span class="t" style="left:1756.10px;top:802.00px;font-size:19.0px;color:#70707b;letter-spacing:-0.018px;">Apr 2025</span>
<span class="t" style="left:709.00px;top:863.00px;font-size:18.4px;color:#70707b;letter-spacing:-0.141px;">Oct 1, 2022–May 18, 2025</span>
<span class="t" style="left:981.50px;top:863.00px;font-size:18.4px;color:#70707b;letter-spacing:-0.064px;">Feb 13, 2020–Sep 30, 2022</span>
<span class="t" style="left:1934.53px;top:326.48px;font-size:20.07px;color:#2a2a2a;letter-spacing:1.197px;-webkit-text-stroke:1.05px #2a2a2a;">Total sales breakdown</span>
<span class="t" style="left:1953.65px;top:383.45px;font-size:20.76px;color:#2957b5;letter-spacing:0.305px;-webkit-text-stroke:0.3px #2957b5;">Gross sales</span>
<span class="t" style="left:2562.78px;top:383.48px;font-size:20.54px;color:#303030;letter-spacing:0.682px;-webkit-text-stroke:0.25px #303030;">£4,815,286.52</span>
<span class="t" style="left:2732.93px;top:387.88px;font-size:16.86px;color:#368a59;letter-spacing:0.408px;-webkit-text-stroke:0.65px #368a59;">166%</span>
<span class="t" style="left:1953.65px;top:450.19px;font-size:20.76px;color:#2957b5;letter-spacing:0.649px;-webkit-text-stroke:0.3px #2957b5;">Discounts</span>
<span class="t" style="left:2551.53px;top:450.22px;font-size:20.54px;color:#303030;letter-spacing:0.970px;-webkit-text-stroke:0.25px #303030;">-£4,412,024.48</span>
<span class="t" style="left:2732.68px;top:454.62px;font-size:16.86px;color:#66666f;letter-spacing:0.575px;-webkit-text-stroke:0.65px #66666f;">186%</span>
<span class="t" style="left:1953.65px;top:516.93px;font-size:20.76px;color:#2957b5;letter-spacing:0.391px;-webkit-text-stroke:0.3px #2957b5;">Returns</span>
<span class="t" style="left:2591.72px;top:516.95px;font-size:20.54px;color:#303030;letter-spacing:0.416px;-webkit-text-stroke:0.25px #303030;">-£31,370.91</span>
<span class="t" style="left:2737.12px;top:521.35px;font-size:16.86px;color:#66666f;letter-spacing:1.100px;-webkit-text-stroke:0.65px #66666f;">73%</span>
<span class="t" style="left:1953.65px;top:583.67px;font-size:20.76px;color:#2957b5;letter-spacing:0.450px;-webkit-text-stroke:0.3px #2957b5;">Net sales</span>
<span class="t" style="left:2592.72px;top:583.69px;font-size:20.54px;color:#303030;letter-spacing:-0.314px;-webkit-text-stroke:0.25px #303030;">£371,891.13</span>
<span class="t" style="left:2736.03px;top:588.09px;font-size:16.86px;color:#368a59;letter-spacing:2.200px;-webkit-text-stroke:0.65px #368a59;">48%</span>
<span class="t" style="left:1953.65px;top:650.41px;font-size:20.76px;color:#2957b5;letter-spacing:0.689px;-webkit-text-stroke:0.3px #2957b5;">Shipping charges</span>
<span class="t" style="left:2592.72px;top:650.43px;font-size:20.54px;color:#303030;letter-spacing:0.920px;-webkit-text-stroke:0.25px #303030;">£37,405.64</span>
<span class="t" style="left:2738.07px;top:654.83px;font-size:16.86px;color:#368a59;letter-spacing:0.150px;-webkit-text-stroke:0.65px #368a59;">12%</span>
<span class="t" style="left:1953.65px;top:717.15px;font-size:20.76px;color:#2957b5;letter-spacing:0.502px;-webkit-text-stroke:0.3px #2957b5;">Return fees</span>
<span class="t" style="left:2647.72px;top:717.17px;font-size:20.54px;color:#303030;letter-spacing:1.365px;-webkit-text-stroke:0.25px #303030;">£0.00</span>
<span class="t" style="left:1953.65px;top:783.89px;font-size:20.76px;color:#2957b5;letter-spacing:0.370px;-webkit-text-stroke:0.3px #2957b5;">Taxes</span>
<span class="t" style="left:2593.53px;top:783.91px;font-size:20.54px;color:#303030;letter-spacing:0.832px;-webkit-text-stroke:0.25px #303030;">£79,825.74</span>
<span class="t" style="left:2736.43px;top:788.31px;font-size:16.86px;color:#8a8a8a;letter-spacing:1.800px;-webkit-text-stroke:0.65px #8a8a8a;">43%</span>
<span class="t" style="left:1953.65px;top:850.63px;font-size:20.76px;color:#2957b5;letter-spacing:0.515px;-webkit-text-stroke:0.3px #2957b5;">Total sales</span>
<span class="t" style="left:2588.12px;top:850.65px;font-size:20.54px;color:#303030;letter-spacing:0.386px;-webkit-text-stroke:0.25px #303030;">£489,122.51</span>
<span class="t" style="left:2735.93px;top:855.05px;font-size:16.86px;color:#368a59;letter-spacing:2.300px;-webkit-text-stroke:0.65px #368a59;">44%</span>
<span class="t" style="left:80.33px;top:974.77px;font-size:20.07px;color:#2a2a2a;letter-spacing:1.072px;-webkit-text-stroke:1.05px #2a2a2a;">Total sales by sales channel</span>
<span class="t" style="left:183.88px;top:1139.83px;font-size:32.22px;color:#303030;letter-spacing:-0.399px;-webkit-text-stroke:0.95px #303030;">£489.1K</span>
<span class="t" style="left:230.02px;top:1181.27px;font-size:17.86px;color:#368a59;letter-spacing:1.550px;-webkit-text-stroke:0.65px #368a59;">44%</span>
<span class="t" style="left:454.90px;top:1073.30px;font-size:19.5px;color:#66666f;letter-spacing:0.209px;">Online Store</span>
<span class="t" style="left:718.60px;top:1073.30px;font-size:19.5px;color:#66666f;letter-spacing:0.557px;">£359.3K</span>
<span class="t" style="left:819.33px;top:1075.27px;font-size:17.46px;color:#368a59;letter-spacing:1.622px;-webkit-text-stroke:0.65px #368a59;">34%</span>
<span class="t" style="left:454.90px;top:1117.37px;font-size:19.5px;color:#66666f;letter-spacing:0.451px;">Recharge Subscriptions</span>
<span class="t" style="left:722.30px;top:1117.37px;font-size:19.5px;color:#66666f;letter-spacing:-0.059px;">£126.9K</span>
<span class="t" style="left:819.33px;top:1119.34px;font-size:17.46px;color:#368a59;letter-spacing:0.472px;-webkit-text-stroke:0.65px #368a59;">78%</span>
<span class="t" style="left:454.90px;top:1161.44px;font-size:19.5px;color:#66666f;letter-spacing:0.118px;">Shop</span>
<span class="t" style="left:743.00px;top:1161.44px;font-size:19.5px;color:#66666f;letter-spacing:0.158px;">£2.7K</span>
<span class="t" style="left:816.70px;top:1163.74px;font-size:14.43px;color:#368a59;letter-spacing:1.303px;-webkit-text-stroke:0.6px #368a59;">470%</span>
<span class="t" style="left:454.90px;top:1205.51px;font-size:19.5px;color:#66666f;letter-spacing:0.378px;">iCart Cart Upsell</span>
<span class="t" style="left:723.10px;top:1205.51px;font-size:19.5px;color:#66666f;letter-spacing:0.167px;">£108.64</span>
<span class="t" style="left:439.80px;top:1260.80px;font-size:18.0px;color:#66666f;letter-spacing:0.209px;">+6 more</span>
<span class="t" style="left:990.23px;top:973.18px;font-size:20.07px;color:#2a2a2a;letter-spacing:1.081px;-webkit-text-stroke:1.05px #2a2a2a;">Average order value over time</span>
<span class="t" style="left:990.18px;top:1014.53px;font-size:32.02px;color:#303030;letter-spacing:0.622px;-webkit-text-stroke:0.95px #303030;">£24.67</span>
<span class="t" style="left:1122.53px;top:1024.97px;font-size:17.66px;color:#368a59;letter-spacing:0.853px;-webkit-text-stroke:0.65px #368a59;">23%</span>
<span class="t" style="left:992.90px;top:1073.60px;font-size:19.2px;color:#70707b;letter-spacing:-0.691px;">£...</span>
<span class="t" style="left:992.90px;top:1200.10px;font-size:19.2px;color:#70707b;letter-spacing:-0.944px;">£0</span>
<span class="t" style="left:1031.25px;top:1233.40px;font-size:19.0px;color:#70707b;letter-spacing:-0.087px;">Oct 2022</span>
<span class="t" style="left:1155.27px;top:1233.40px;font-size:19.0px;color:#70707b;letter-spacing:-0.040px;">Mar 2023</span>
<span class="t" style="left:1280.54px;top:1233.40px;font-size:19.0px;color:#70707b;letter-spacing:-0.051px;">Aug 2023</span>
<span class="t" style="left:1408.06px;top:1233.40px;font-size:19.0px;color:#70707b;letter-spacing:-0.098px;">Jan 2024</span>
<span class="t" style="left:1533.33px;top:1233.40px;font-size:19.0px;color:#70707b;letter-spacing:0.045px;">Jun 2024</span>
<span class="t" style="left:1658.10px;top:1233.40px;font-size:19.0px;color:#70707b;letter-spacing:-0.121px;">Nov 2024</span>
<span class="t" style="left:1785.62px;top:1233.40px;font-size:19.0px;color:#70707b;letter-spacing:-0.018px;">Apr 2025</span>
<span class="t" style="left:1181.00px;top:1294.70px;font-size:18.4px;color:#70707b;letter-spacing:-0.124px;">Oct 1, 2022–May 18, 2025</span>
<span class="t" style="left:1453.20px;top:1294.70px;font-size:18.4px;color:#70707b;letter-spacing:-0.039px;">Feb 13, 2020–Sep 30, 2022</span>
<span class="t" style="left:1968.23px;top:974.77px;font-size:20.07px;color:#2a2a2a;letter-spacing:1.238px;-webkit-text-stroke:1.05px #2a2a2a;">Total sales by product</span>
<span class="t" style="left:1933.50px;top:1021.30px;font-size:18.6px;color:#70707b;letter-spacing:-0.076px;">Vieve Protein Water Mixed Flavour Pack - 10 Pack · Vieve Protein Water · None</span>
<span class="t" style="left:1933.50px;top:1188.10px;font-size:18.6px;color:#70707b;letter-spacing:-0.004px;">Strawberry and Rhubarb Protein Water - 6 Pack · Vieve Protein Water · None</span>
<span class="t" style="left:2597.60px;top:1065.10px;font-size:17.9px;color:#70707b;letter-spacing:-0.710px;">£128,139.19</span>
<span class="t" style="left:2736.22px;top:1065.67px;font-size:17.06px;color:#368a59;letter-spacing:-0.265px;-webkit-text-stroke:0.65px #368a59;">113%</span>
<span class="t" style="left:2253.30px;top:1119.90px;font-size:18.0px;color:#70707b;letter-spacing:0.212px;">£60,087.70</span>
<span class="t" style="left:2248.30px;top:1231.30px;font-size:18.0px;color:#70707b;letter-spacing:0.023px;">£59,105.93</span>
<span class="t" style="left:2382.32px;top:1232.77px;font-size:17.46px;color:#4a4a4a;letter-spacing:1.200px;-webkit-text-stroke:0.65px #4a4a4a;">0.9%</span>
<span class="t" style="left:2250.50px;top:1287.50px;font-size:18.0px;color:#70707b;letter-spacing:-0.055px;">£59,617.45</span>
</div>
</body>
</html>
